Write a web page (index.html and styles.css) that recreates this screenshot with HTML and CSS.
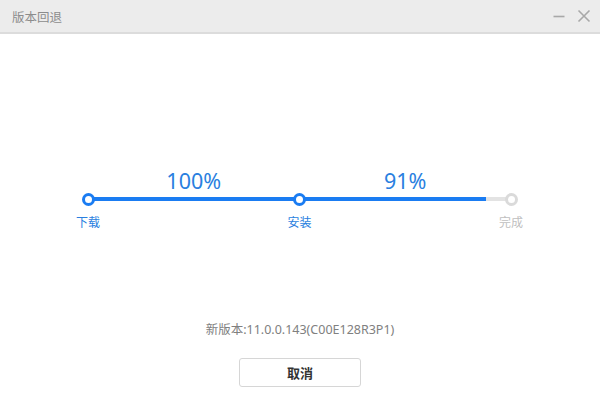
FILE: index.html
```html
<!DOCTYPE html>
<html lang="zh">
<head>
<meta charset="utf-8">
<title>版本回退</title>
<link rel="stylesheet" href="styles.css">
</head>
<body>
<div class="window">
  <div class="titlebar">
    <span class="title">版本回退</span>
    <div class="controls">
      <svg class="ctl" width="14" height="14" viewBox="0 0 14 14"><path d="M1.5 7.5H12.5" stroke="#a8a8a8" stroke-width="1.6" fill="none"/></svg>
      <svg class="ctl" width="14" height="14" viewBox="0 0 14 14"><path d="M1.5 1.5L12.5 12.5M12.5 1.5L1.5 12.5" stroke="#a8a8a8" stroke-width="1.6" fill="none"/></svg>
    </div>
  </div>
  <div class="main">
    <div class="stepper">
      <div class="pct pct1">100%</div>
      <div class="pct pct2">91%</div>
      <div class="track"></div>
      <div class="node n1"></div>
      <div class="node n2"></div>
      <div class="node n3 off"></div>
      <div class="lbl l1">下载</div>
      <div class="lbl l2">安装</div>
      <div class="lbl l3 off">完成</div>
    </div>
    <div class="version">新版本:11.0.0.143(C00E128R3P1)</div>
    <button class="btn">取消</button>
  </div>
</div>
</body>
</html>
```
FILE: styles.css
```css
* { box-sizing: border-box; }
html, body { margin: 0; padding: 0; background: #fff; }
body { font-family: "Noto Sans", "Noto Sans CJK SC", sans-serif; }
.window { width: 600px; height: 410px; display: flex; flex-direction: column; background: #fff; }
.titlebar {
  height: 34px; flex: none; background: #ececec;
  border-bottom: 2px solid #dcdcdc;
  display: flex; align-items: center; justify-content: space-between;
  padding: 0 9px 0 12px;
}
.title { font-family: "Noto Sans CJK SC", sans-serif; font-size: 12.5px; color: #8c8c8c; }
.controls { display: flex; gap: 11px; align-items: center; }
.ctl { display: block; }
.main { flex: 1; display: flex; flex-direction: column; align-items: center; padding-top: 136px; }
.stepper {
  align-self: flex-start; margin-left: 68px; width: 463px;
  display: grid; grid-template-columns: 40px 1fr 40px 1fr 40px;
  grid-template-rows: 22px 14px auto;
}
.pct { grid-row: 1; justify-self: center; font-size: 21.5px; line-height: 22px; color: #2a7fe0; }
.pct1 { grid-column: 2; }
.pct2 { grid-column: 4; }
.track {
  grid-row: 2; grid-column: 1 / -1; align-self: center; margin: 0 20px; height: 4px;
  background: linear-gradient(to right, #1a7cf2 0 94.1%, #e3e3e3 94.1% 100%);
}
.node {
  grid-row: 2; justify-self: center; align-self: center; z-index: 1;
  width: 13px; height: 13px; border-radius: 50%; border: 3px solid #1a7cf2; background: #fff;
}
.node.off { border-color: #dadada; }
.n1, .l1 { grid-column: 1; }
.n2, .l2 { grid-column: 3; }
.n3, .l3 { grid-column: 5; }
.lbl {
  grid-row: 3; justify-self: center; margin-top: 8px;
  font-family: "Noto Sans CJK SC", sans-serif; font-size: 12px; line-height: 16px; color: #2a7fe0;
}
.lbl.off { color: #c0c0c0; }
.version {
  margin-top: 92px; font-size: 12.5px; line-height: 16px; color: #808080;
}
.btn {
  margin-top: 20px; width: 122px; height: 29px; background: #fff;
  border: 1px solid #d6d6d6; border-radius: 3px;
  font-family: "Noto Sans CJK SC", sans-serif; font-size: 13px; font-weight: 700; color: #333;
  padding: 0;
}
```
